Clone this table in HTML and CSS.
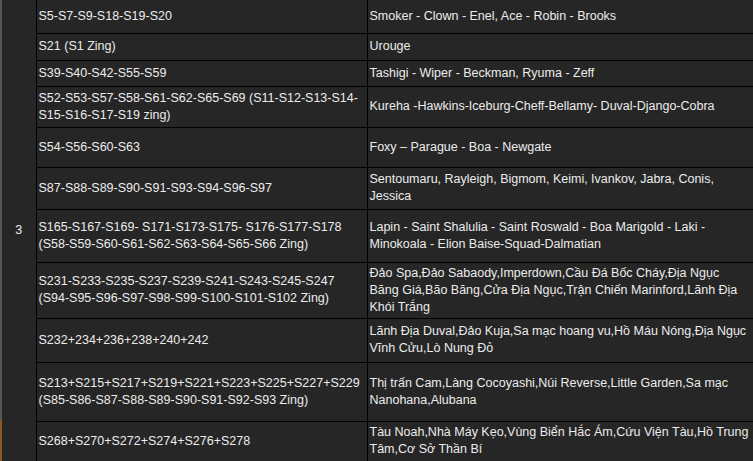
FILE: index.html
```html
<!DOCTYPE html>
<html>
<head>
  <meta charset="utf-8">
  <title>Server list</title>
  <link rel="stylesheet" href="styles.css">
</head>
<body>

  <table class="servers">
    <colgroup>
      <col class="col-group">
      <col class="col-server">
      <col class="col-boss">
    </colgroup>
    <tr class="h33">
      <td class="group" rowspan="11">3</td>
      <td>S5-S7-S9-S18-S19-S20</td>
      <td>Smoker - Clown - Enel, Ace - Robin - Brooks</td>
    </tr>
    <tr class="h27">
      <td>S21 (S1 Zing)</td>
      <td>Urouge</td>
    </tr>
    <tr class="h26">
      <td>S39-S40-S42-S55-S59</td>
      <td>Tashigi - Wiper - Beckman, Ryuma - Zeff</td>
    </tr>
    <tr class="h41">
      <td>S52-S53-S57-S58-S61-S62-S65-S69 (S11-S12-S13-S14-<br>S15-S16-S17-S19 zing)</td>
      <td>Kureha -Hawkins-Iceburg-Cheff-Bellamy- Duval-Django-Cobra</td>
    </tr>
    <tr class="h40">
      <td>S54-S56-S60-S63</td>
      <td>Foxy – Parague - Boa - Newgate</td>
    </tr>
    <tr class="h42">
      <td>S87-S88-S89-S90-S91-S93-S94-S96-S97</td>
      <td>Sentoumaru, Rayleigh, Bigmom, Keimi, Ivankov, Jabra, Conis,<br>Jessica</td>
    </tr>
    <tr class="h53">
      <td>S165-S167-S169- S171-S173-S175- S176-S177-S178<br>(S58-S59-S60-S61-S62-S63-S64-S65-S66 Zing)</td>
      <td>Lapin - Saint Shalulia - Saint Roswald - Boa Marigold - Laki -<br>Minokoala - Elion Baise-Squad-Dalmatian</td>
    </tr>
    <tr class="h56">
      <td>S231-S233-S235-S237-S239-S241-S243-S245-S247<br>(S94-S95-S96-S97-S98-S99-S100-S101-S102 Zing)</td>
      <td>Đảo Spa,Đảo Sabaody,Imperdown,Cầu Đá Bốc Cháy,Địa Ngục<br>Băng Giá,Bão Băng,Cửa Địa Ngục,Trận Chiến Marinford,Lãnh Địa<br>Khói Trắng</td>
    </tr>
    <tr class="h44">
      <td>S232+234+236+238+240+242</td>
      <td>Lãnh Địa Duval,Đảo Kuja,Sa mạc hoang vu,Hồ Máu Nóng,Địa Ngục<br>Vĩnh Cửu,Lò Nung Đỏ</td>
    </tr>
    <tr class="h59">
      <td>S213+S215+S217+S219+S221+S223+S225+S227+S229<br>(S85-S86-S87-S88-S89-S90-S91-S92-S93 Zing)</td>
      <td>Thị trấn Cam,Làng Cocoyashi,Núi Reverse,Little Garden,Sa mạc<br>Nanohana,Alubana</td>
    </tr>
    <tr class="h40">
      <td>S268+S270+S272+S274+S276+S278</td>
      <td>Tàu Noah,Nhà Máy Kẹo,Vùng Biển Hắc Ám,Cứu Viện Tàu,Hồ Trung<br>Tâm,Cơ Sở Thần Bí</td>
    </tr>
  </table>

</body>
</html>
```

FILE: styles.css
```css
html, body {
  height: 100%;
  overflow: hidden;
}
body {
  background: linear-gradient(#555 0, #555 420px, #8a5d22 420px);
  margin: 0;
  padding-left: 2px;
}
.servers {
  background: #262626;
  border-collapse: collapse;
  color: #ececec;
  font-family: Tahoma, "Liberation Sans", sans-serif;
  font-size: 12.5px;
  line-height: 17px;
  table-layout: fixed;
  width: 820px;
}
.col-group {
  width: 34px;
}
.col-server {
  width: 331px;
}
.servers td {
  border: 1px solid #000;
  padding: 0 2px;
  vertical-align: middle;
  white-space: nowrap;
}
.servers td.group {
  border-left: none;
  text-align: center;
}
.servers tr:first-child td {
  border-top: none;
}
.h26 { height: 26px; }
.h27 { height: 27px; }
.h33 { height: 33px; }
.h40 { height: 40px; }
.h41 { height: 41px; }
.h42 { height: 42px; }
.h44 { height: 44px; }
.h53 { height: 53px; }
.h56 { height: 56px; }
.h59 { height: 59px; }
```
